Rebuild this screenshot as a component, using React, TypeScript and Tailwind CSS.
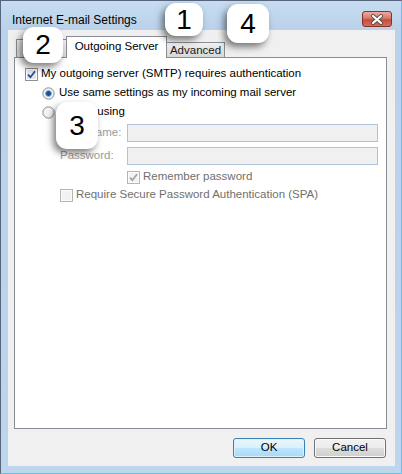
import React from "react";

const CheckBox = ({ checked, disabled }: { checked?: boolean; disabled?: boolean }) => (
  <svg width="13" height="13" viewBox="0 0 13 13" className="shrink-0">
    <rect x="0.5" y="0.5" width="12" height="12" fill="#fcfcfc" stroke={disabled ? "#b5b5b5" : "#8e8f8f"} />
    <rect x="2" y="2" width="9" height="9" fill={disabled ? "#f2f2f2" : "#e3e5e8"} />
    {checked && (
      <path
        d="M3 6.6 L5.4 9.2 L10 3.2"
        fill="none"
        stroke={disabled ? "#a3a3a3" : "#26459a"}
        strokeWidth="1.7"
      />
    )}
  </svg>
);

const Radio = ({ selected }: { selected?: boolean }) => (
  <svg width="13" height="13" viewBox="0 0 13 13" className="shrink-0">
    <circle cx="6.5" cy="6.5" r="5.7" fill="#ededed" stroke="#8e8f8f" />
    <circle cx="6.5" cy="6.5" r="4.2" fill="#f6f6f6" />
    {selected && <circle cx="6.5" cy="6.5" r="3" fill="#1b4f92" stroke="#7fbcec" strokeWidth="1" />}
  </svg>
);

const Badge = ({ className, children }: { className: string; children: React.ReactNode }) => (
  <div
    className={
      "absolute z-20 flex items-center justify-center rounded-[11px] bg-white text-[28px] leading-none text-black shadow-[-3px_4px_7px_rgba(0,0,0,0.5)] " +
      className
    }
  >
    {children}
  </div>
);

const App = () => {
  return (
    <div className="relative flex h-[474px] w-[402px] flex-col overflow-hidden border-l border-t border-[#56657a] border-r border-b border-r-[#46d2ee] border-b-[#46d2ee] bg-[linear-gradient(180deg,#c7dcf0,#b9d1ea_30px,#bdd5ed)] font-['Liberation_Sans',Arial,sans-serif] text-[11.5px] text-black">
      {/* title bar */}
      <div className="flex h-[29px] items-start justify-between">
        <div className="pl-[11px] pt-[12px] leading-[14px] text-[12px]">Internet E-mail Settings</div>
        <div className="mr-[9px] mt-[10px] flex h-[16px] w-[30px] items-center justify-center rounded-[3px] border border-[#8c2f25] bg-[linear-gradient(180deg,#eaaa9f,#d77a6a_45%,#c64d3a_55%,#d0705c)]">
          <svg width="14" height="11" viewBox="0 0 14 11">
            <path d="M3 2 L11 9 M11 2 L3 9" stroke="#5b4a48" strokeWidth="4" strokeLinecap="round" />
            <path d="M3 2 L11 9 M11 2 L3 9" stroke="#ffffff" strokeWidth="2.2" strokeLinecap="round" />
          </svg>
        </div>
      </div>

      {/* client area */}
      <div className="ml-[7px] mr-[6px] flex h-[436px] flex-col bg-[#f0f0f0] pl-[6px] pr-[8px]">
        {/* tabs */}
        <div className="flex h-[27px] items-end">
          <div className="ml-[2px] h-[18px] w-[50px] border-l border-t border-[#898c95] bg-[linear-gradient(180deg,#f3f3f3,#e3e3e3_50%,#dadada)]" />
          <div className="relative z-10 mb-[-1px] flex h-[22px] w-[101px] items-center justify-center border-l border-r border-t border-[#898c95] bg-white pb-[2px]">
            Outgoing Server
          </div>
          <div className="flex h-[15px] w-[58px] items-center justify-center border-r border-t border-[#898c95] bg-[linear-gradient(180deg,#f2f2f2,#e2e2e2_50%,#d8d8d8)] pt-[1px] text-[#1a1a1a]">
            Advanced
          </div>
        </div>

        {/* panel */}
        <div className="flex h-[372px] flex-col border border-[#898c95] bg-white pl-[10px] pt-[7px]">
          <div className="flex h-[18px] items-center gap-[3px]">
            <CheckBox checked />
            <span>My outgoing server (SMTP) requires authentication</span>
          </div>
          <div className="ml-[17px] mt-[1px] flex h-[18px] items-center gap-[4px]">
            <Radio selected />
            <span>Use same settings as my incoming mail server</span>
          </div>
          <div className="ml-[17px] mt-[1px] flex h-[18px] items-center gap-[4px]">
            <Radio />
            <span>Log on using</span>
          </div>
          <div className="ml-[35px] mt-[3px] flex h-[18px] items-center">
            <span className="w-[67px] text-[#9a9a9a]">User Name:</span>
            <div className="h-[18px] w-[251px] border border-[#aec3da] bg-[#f0f0f0]" />
          </div>
          <div className="ml-[35px] mt-[5px] flex h-[18px] items-center">
            <span className="w-[67px] text-[#9a9a9a]">Password:</span>
            <div className="h-[18px] w-[251px] border border-[#aec3da] bg-[#f0f0f0]" />
          </div>
          <div className="ml-[102px] mt-[3px] flex h-[18px] items-center gap-[3px]">
            <CheckBox checked disabled />
            <span className="text-[#6f6f6f]">Remember password</span>
          </div>
          <div className="ml-[35px] flex h-[18px] items-center gap-[3px]">
            <CheckBox disabled />
            <span className="text-[#6f6f6f]">Require Secure Password Authentication (SPA)</span>
          </div>
        </div>

        {/* buttons */}
        <div className="flex h-[37px] items-start justify-end gap-[9px] pr-[1px] pt-[9px]">
          <button className="flex h-[20px] w-[72px] items-center justify-center rounded-[3px] border border-[#3c7fb1] bg-[linear-gradient(180deg,#eaf6fd,#d9f0fc_50%,#bee6fd_50%,#a7d9f5)] shadow-[inset_0_0_0_1px_#dff2fc]">
            OK
          </button>
          <button className="flex h-[20px] w-[72px] items-center justify-center rounded-[3px] border border-[#707070] bg-[linear-gradient(180deg,#f2f2f2,#ebebeb_50%,#dddddd_50%,#cfcfcf)] shadow-[inset_0_0_0_1px_#fbfbfb]">
            Cancel
          </button>
        </div>
      </div>

      {/* callout numbers */}
      <Badge className="left-[164px] top-[2px] h-[33px] w-[38px]">1</Badge>
      <Badge className="left-[226px] top-[3px] h-[39px] w-[42px]">4</Badge>
      <Badge className="left-[22px] top-[26px] h-[36px] w-[40px]">2</Badge>
      <Badge className="left-[55px] top-[101px] h-[47px] w-[42px]">3</Badge>
    </div>
  );
};

export default App;
